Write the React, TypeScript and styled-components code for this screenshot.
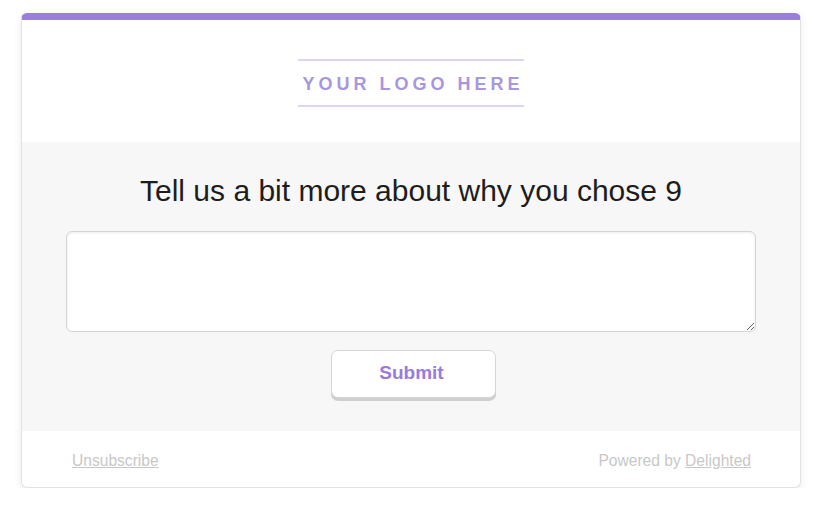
import styled, { createGlobalStyle } from "styled-components";

const GlobalStyle = createGlobalStyle`
  html, body {
    margin: 0;
    padding: 0;
    background: #ffffff;
    font-family: "Liberation Sans", Arial, Helvetica, sans-serif;
  }
`;

const Page = styled.div`
  padding: 13px 21px 0 21px;
  width: 822px;
  box-sizing: border-box;
`;

const Card = styled.div`
  width: 780px;
  border-radius: 6px;
  overflow: hidden;
  background: #fff;
  border: 1px solid #e2e2e2;
  border-top: 7px solid #9a7fdb;
  box-shadow: 0 2px 8px rgba(0, 0, 0, 0.08);
  box-sizing: border-box;
`;

const Header = styled.div`
  height: 122px;
  padding-top: 4px;
  box-sizing: border-box;
  display: flex;
  align-items: center;
  justify-content: center;
`;

const Logo = styled.div`
  width: 226px;
  height: 48px;
  border-top: 2px solid #ddd5f3;
  border-bottom: 2px solid #ddd5f3;
  display: flex;
  align-items: center;
  justify-content: center;
  color: #a897e0;
  font-family: "Liberation Sans", Arial, sans-serif;
  font-weight: 700;
  font-size: 18px;
  letter-spacing: 4px;
  padding: 3px 0 0 4px;
  box-sizing: border-box;
`;

const Body = styled.div`
  background: #f7f7f7;
  height: 289px;
  padding: 31px 45px 0 45px;
  box-sizing: border-box;
  display: flex;
  flex-direction: column;
  align-items: center;
`;

const Question = styled.h2`
  margin: 0;
  font-size: 30px;
  font-weight: 400;
  color: #1d1d1d;
  line-height: 36px;
`;

const TextArea = styled.textarea`
  margin-top: 22px;
  width: 690px;
  height: 101px;
  border: 1px solid #d4d4d4;
  border-radius: 6px;
  background: #fff;
  box-shadow: inset 0 1px 3px rgba(0, 0, 0, 0.08);
  box-sizing: border-box;
  resize: vertical;
  font-family: inherit;
  outline: none;
  display: block;
`;

const SubmitButton = styled.button`
  margin-top: 18px;
  margin-left: 5px;
  width: 165px;
  height: 48px;
  background: #fff;
  border: 1px solid #d6d6d6;
  border-radius: 7px;
  box-shadow: 0 3px 0 #cfcfcf;
  color: #9a7bdc;
  font-family: inherit;
  font-weight: 700;
  font-size: 19px;
  padding: 0 4px 3px 0;
  cursor: pointer;
`;

const Footer = styled.div`
  height: 56px;
  padding: 3px 49px 0 50px;
  box-sizing: border-box;
  display: flex;
  align-items: center;
  justify-content: space-between;
  font-size: 15.6px;
  color: #c8c8c8;
`;

const FooterLink = styled.a`
  color: #c8c8c8;
  text-decoration: underline;
`;

export default function App() {
  return (
    <>
      <GlobalStyle />
      <Page>
        <Card>
          <Header>
            <Logo>YOUR LOGO HERE</Logo>
          </Header>
          <Body>
            <Question>Tell us a bit more about why you chose 9</Question>
            <TextArea />
            <SubmitButton>Submit</SubmitButton>
          </Body>
          <Footer>
            <FooterLink href="#">Unsubscribe</FooterLink>
            <span>
              Powered by <FooterLink href="#">Delighted</FooterLink>
            </span>
          </Footer>
        </Card>
      </Page>
    </>
  );
}
